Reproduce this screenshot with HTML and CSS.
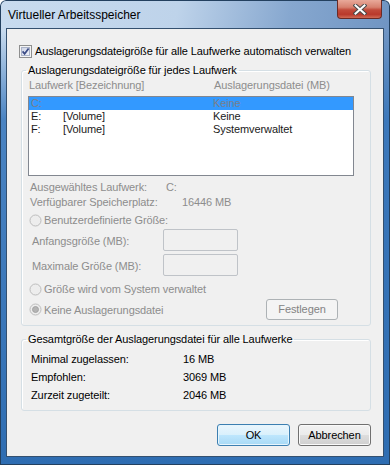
FILE: index.html
```html
<!DOCTYPE html>
<html lang="de">
<head>
<meta charset="utf-8">
<title>Virtueller Arbeitsspeicher</title>
<link rel="stylesheet" href="styles.css">
</head>
<body>
<div class="window">
  <div class="titlebar">
    <span class="title">Virtueller Arbeitsspeicher</span>
    <div class="close">
      <svg width="14" height="11" viewBox="0 0 14 11">
        <path d="M2.5 1.5 L11.5 9.5 M11.5 1.5 L2.5 9.5" stroke="#4a4a4a" stroke-width="4" stroke-linecap="square" fill="none"/>
        <path d="M2.5 1.5 L11.5 9.5 M11.5 1.5 L2.5 9.5" stroke="#ffffff" stroke-width="2" stroke-linecap="square" fill="none"/>
      </svg>
    </div>
  </div>
  <div class="client">
    <div class="checkrow">
      <svg class="checkbox" width="13" height="13" viewBox="0 0 13 13">
        <defs>
          <linearGradient id="cbg" x1="0" y1="0" x2="1" y2="1">
            <stop offset="0" stop-color="#cdd3e6"/>
            <stop offset="1" stop-color="#f1f3f9"/>
          </linearGradient>
        </defs>
        <rect x="0.5" y="0.5" width="12" height="12" fill="#f4f4f4" stroke="#8e8f8f"/>
        <rect x="2.5" y="2.5" width="8" height="8" fill="url(#cbg)" stroke="#aab3c8"/>
        <path d="M3.6 6.4 L5.6 8.8 L9.6 3.4" fill="none" stroke="#3b4c86" stroke-width="1.7"/>
      </svg>
      <span>Auslagerungsdateigröße für alle Laufwerke automatisch verwalten</span>
    </div>

    <fieldset class="group group1">
      <legend>Auslagerungsdateigröße für jedes Laufwerk</legend>
      <div class="colhead">
        <span>Laufwerk [Bezeichnung]</span>
        <span>Auslagerungsdatei (MB)</span>
      </div>
      <div class="listbox">
        <div class="lrow selected"><span>C:</span><span></span><span>Keine</span></div>
        <div class="lrow"><span>E:</span><span>[Volume]</span><span>Keine</span></div>
        <div class="lrow"><span>F:</span><span>[Volume]</span><span>Systemverwaltet</span></div>
      </div>
      <div class="info">
        <span>Ausgewähltes Laufwerk:</span><span>C:</span>
        <span>Verfügbarer Speicherplatz:</span><span class="space">16446 MB</span>
      </div>
      <div class="radio radio1">
        <svg width="13" height="13" viewBox="0 0 13 13"><circle cx="6.5" cy="6.5" r="5.5" fill="#ededed" stroke="#bdbdbd"/></svg>
        <span>Benutzerdefinierte Größe:</span>
      </div>
      <div class="sizerow first">
        <span>Anfangsgröße (MB):</span><div class="input"></div>
      </div>
      <div class="sizerow">
        <span>Maximale Größe (MB):</span><div class="input"></div>
      </div>
      <div class="radio radio2">
        <svg width="13" height="13" viewBox="0 0 13 13"><circle cx="6.5" cy="6.5" r="5.5" fill="#ededed" stroke="#bdbdbd"/></svg>
        <span>Größe wird vom System verwaltet</span>
      </div>
      <div class="lastrow">
        <div class="radio">
          <svg width="13" height="13" viewBox="0 0 13 13"><circle cx="6.5" cy="6.5" r="5.5" fill="#ededed" stroke="#bdbdbd"/><circle cx="6.5" cy="6.5" r="3" fill="#b4b4b4" stroke="#9a9a9a" stroke-width="0.8"/></svg>
          <span>Keine Auslagerungsdatei</span>
        </div>
        <div class="btn disabled">Festlegen</div>
      </div>
    </fieldset>

    <fieldset class="group group2">
      <legend>Gesamtgröße der Auslagerungsdatei für alle Laufwerke</legend>
      <div class="totals">
        <span>Minimal zugelassen:</span><span>16 MB</span>
        <span>Empfohlen:</span><span>3069 MB</span>
        <span>Zurzeit zugeteilt:</span><span>2046 MB</span>
      </div>
    </fieldset>

    <div class="buttons">
      <div class="btn default">OK</div>
      <div class="btn normal">Abbrechen</div>
    </div>
  </div>
</div>
</body>
</html>
```

FILE: styles.css
```css
html, body {
  margin: 0;
  padding: 0;
}
body {
  width: 390px;
  height: 465px;
  overflow: hidden;
  font-family: "Liberation Sans", Arial, sans-serif;
  font-size: 11px;
  letter-spacing: -0.1px;
  color: #1a1a1a;
}
.window {
  width: 390px;
  height: 465px;
  box-sizing: border-box;
  border-radius: 6px 6px 0 0;
  background:
    linear-gradient(to bottom, rgba(47,108,174,0) 0, rgba(47,108,174,0) 30px, rgba(52,116,186,0.85) 120px, #2e6db2 100%),
    linear-gradient(100deg, #c8dbef 0%, #bed3ea 38%, #86a7cf 62%, #5f87b9 100%);
  box-shadow: inset 0 0 0 1px #23405f;
}
.titlebar {
  height: 28px;
  display: flex;
  justify-content: space-between;
  align-items: flex-start;
  padding: 0 8px 0 8px;
}
.title {
  margin-top: 8px;
  line-height: 14px;
  font-size: 12px;
  letter-spacing: 0;
  color: #000;
}
.close {
  width: 45px;
  height: 19px;
  box-sizing: border-box;
  border: 1px solid #6a2a25;
  border-top: none;
  border-radius: 0 0 4px 4px;
  background: linear-gradient(to bottom, #e9a99a 0%, #d7816f 40%, #c24a3a 55%, #b9392b 80%, #d06a55 100%);
  display: flex;
  align-items: center;
  justify-content: center;
}
.client {
  margin: 0 6px;
  height: 427px;
  background: #f0f0f0;
  border: 1px solid #34506f;
}
.checkrow {
  display: flex;
  align-items: center;
  height: 13px;
  margin-top: 16px;
  padding-left: 12px;
  line-height: 13px;
  color: #000;
}
.checkbox {
  margin-right: 3px;
  flex: none;
}
.group {
  margin: 0 12px 0 14px;
  padding: 0;
  border: 1px solid #d5dfe5;
  border-radius: 3px;
  box-shadow: inset 1px 1px 0 #fff;
  min-width: 0;
}
.group legend {
  padding: 0 2px;
  margin-left: 4px;
  line-height: 13px;
  color: #000;
}
.group1 {
  margin-top: 6px;
  padding-bottom: 5px;
}
.colhead {
  display: grid;
  grid-template-columns: 185px auto;
  margin-top: 2px;
  padding-left: 7px;
  line-height: 13px;
  color: #8d8d8d;
}
.listbox {
  margin: 4px 0 0 6px;
  width: 326px;
  height: 80px;
  box-sizing: border-box;
  border: 1px solid #828790;
  background: #fff;
}
.lrow {
  display: grid;
  grid-template-columns: 32px 150px auto;
  height: 13px;
  line-height: 13px;
  padding-left: 2px;
  color: #1a1a1a;
}
.lrow.selected {
  background: #3399ff;
  color: #7a7f8a;
}
.info {
  display: grid;
  grid-template-columns: 136px auto;
  margin-top: 4px;
  padding-left: 8px;
  line-height: 15px;
  color: #8d8d8d;
}
.info .space {
  padding-left: 16px;
}
.radio {
  display: flex;
  align-items: center;
  height: 14px;
  padding-left: 7px;
  color: #8d8d8d;
}
.radio svg {
  flex: none;
  margin-right: 2px;
}
.radio1 {
  margin-top: 3px;
}
.radio2 {
  margin-top: 6px;
}
.sizerow {
  display: grid;
  grid-template-columns: 131px 75px;
  align-items: center;
  height: 22px;
  margin-top: 3px;
  padding-left: 10px;
  color: #8d8d8d;
}
.sizerow.first {
  margin-top: 2px;
}
.sizerow span {
  padding-top: 2px;
}
.input {
  height: 22px;
  box-sizing: border-box;
  border: 1px solid #bfc3c8;
  border-radius: 2px;
  background: #f0f0f0;
}
.lastrow {
  display: flex;
  justify-content: space-between;
  align-items: center;
  height: 21px;
  margin-top: 3px;
  padding-right: 32px;
}
.btn {
  box-sizing: border-box;
  display: flex;
  align-items: center;
  justify-content: center;
  border-radius: 3px;
  line-height: 13px;
}
.btn.disabled {
  width: 72px;
  height: 21px;
  border: 1px solid #adb2b5;
  background: #f4f4f4;
  color: #838383;
}
.group2 {
  margin-top: 7px;
  padding-bottom: 6px;
}
.totals {
  display: grid;
  grid-template-columns: 152px auto;
  margin-top: 4px;
  padding-left: 9px;
  line-height: 18px;
  color: #000;
}
.buttons {
  display: flex;
  justify-content: flex-end;
  gap: 8px;
  margin-top: 13px;
  padding-right: 12px;
}
.btn.default,
.btn.normal {
  width: 73px;
  height: 22px;
  color: #000;
}
.btn.default {
  border: 1px solid #3c7fb1;
  background: linear-gradient(to bottom, #eaf6fd 0%, #d9f0fc 50%, #bee6fd 51%, #a7d9f5 100%);
  box-shadow: inset 0 0 0 1px #e6f5fd;
}
.btn.normal {
  border: 1px solid #707070;
  background: linear-gradient(to bottom, #f2f2f2 0%, #ebebeb 50%, #dddddd 51%, #cfcfcf 100%);
  box-shadow: inset 0 0 0 1px #fafafa;
}
```
